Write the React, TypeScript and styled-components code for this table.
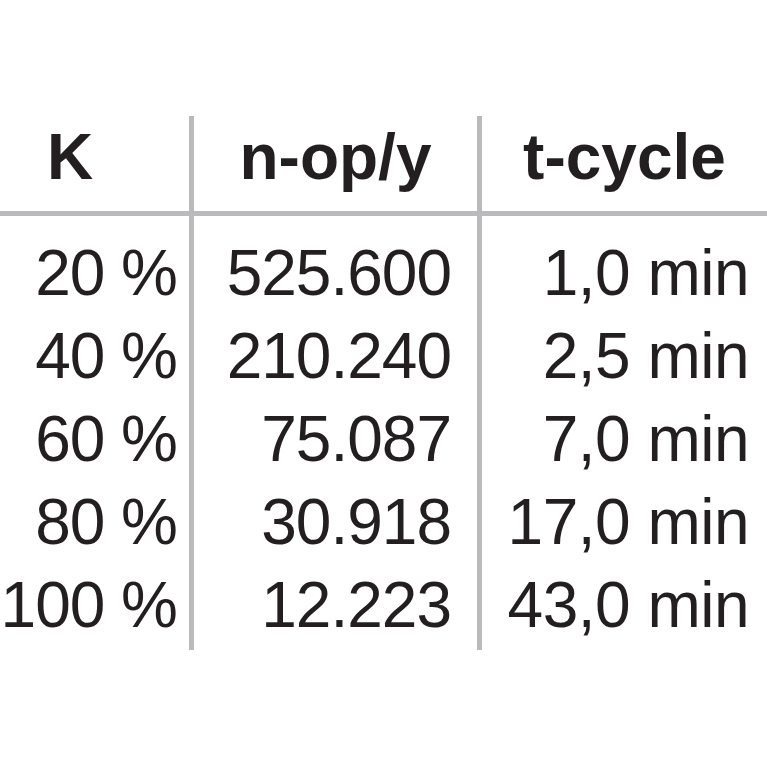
import React from "react";
import styled, { createGlobalStyle } from "styled-components";

const Global = createGlobalStyle`
  html, body { margin: 0; padding: 0; background: #ffffff; }
  body { font-family: "Liberation Sans", Arial, sans-serif; color: #231f20; }
`;

const LINE = "#b9babe";

const Page = styled.div`
  width: 767px;
  height: 767px;
  padding-top: 116px;
  box-sizing: border-box;
  overflow: hidden;
`;

const Table = styled.div`
  display: grid;
  grid-template-columns: 194px 288px 1fr;
`;

const Column = styled.div<{ $last?: boolean }>`
  display: flex;
  flex-direction: column;
  border-right: ${(p) => (p.$last ? "none" : `5px solid ${LINE}`)};
  padding-bottom: 3px;
`;

const HeaderCell = styled.div<{ $align: "left" | "center"; $pad?: number }>`
  font-weight: 700;
  font-size: 64px;
  line-height: 83px;
  padding-bottom: 12px;
  border-bottom: 5px solid ${LINE};
  text-align: ${(p) => p.$align};
  padding-left: ${(p) => p.$pad ?? 0}px;
  white-space: nowrap;
`;

const Body = styled.div<{ $padRight: number; $letter: number }>`
  display: flex;
  flex-direction: column;
  padding-top: 16px;
  padding-right: ${(p) => p.$padRight}px;
  letter-spacing: ${(p) => p.$letter}px;
`;

const Cell = styled.div`
  font-size: 64px;
  line-height: 83px;
  text-align: right;
  white-space: nowrap;
`;

const k = ["20 %", "40 %", "60 %", "80 %", "100 %"];
const nop = ["525.600", "210.240", "75.087", "30.918", "12.223"];
const tc = ["1,0 min", "2,5 min", "7,0 min", "17,0 min", "43,0 min"];

export default function App() {
  return (
    <>
      <Global />
      <Page>
        <Table>
          <Column>
            <HeaderCell $align="left" $pad={47}>K</HeaderCell>
            <Body $padRight={12} $letter={-1}>
              {k.map((v) => (
                <Cell key={v}>{v}</Cell>
              ))}
            </Body>
          </Column>
          <Column>
            <HeaderCell $align="center">n-op/y</HeaderCell>
            <Body $padRight={26} $letter={-1}>
              {nop.map((v) => (
                <Cell key={v}>{v}</Cell>
              ))}
            </Body>
          </Column>
          <Column $last>
            <HeaderCell $align="center">t-cycle</HeaderCell>
            <Body $padRight={18} $letter={-0.5}>
              {tc.map((v) => (
                <Cell key={v}>{v}</Cell>
              ))}
            </Body>
          </Column>
        </Table>
      </Page>
    </>
  );
}
